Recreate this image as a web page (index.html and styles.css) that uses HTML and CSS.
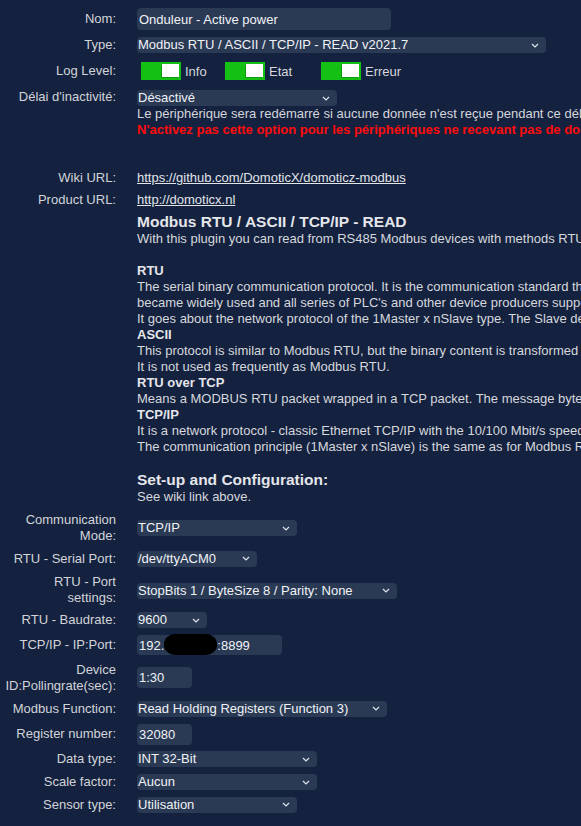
FILE: index.html
```html
<!DOCTYPE html>
<html lang="fr">
<head>
<meta charset="utf-8">
<title>Onduleur - Active power</title>
<link rel="stylesheet" href="styles.css">
</head>
<body>
<div class="page">
  <div class="top">
    <div class="row">
      <span class="lbl">Nom:</span>
      <div class="inp h22 w254">Onduleur - Active power</div>
    </div>
    <div class="row mt7">
      <span class="lbl">Type:</span>
      <div class="sel w409"><span>Modbus RTU / ASCII / TCP/IP - READ v2021.7</span><svg class="chev" width="8" height="5" viewBox="0 0 8 5"><path d="M1 1l3 3 3-3" fill="none" stroke="#dfe3ea" stroke-width="1.2"/></svg></div>
    </div>
    <div class="row mt9">
      <span class="lbl">Log Level:</span>
      <div class="opts">
        <div class="opt o84"><span class="toggle"><span class="knob"></span></span><span>Info</span></div>
        <div class="opt o96"><span class="toggle"><span class="knob"></span></span><span>Etat</span></div>
        <div class="opt"><span class="toggle"><span class="knob"></span></span><span>Erreur</span></div>
      </div>
    </div>
    <div class="row start mt9">
      <span class="lbl">Délai d'inactivité:</span>
      <div class="field">
        <div class="sel w200 mt1"><span>Désactivé</span><svg class="chev" width="8" height="5" viewBox="0 0 8 5"><path d="M1 1l3 3 3-3" fill="none" stroke="#dfe3ea" stroke-width="1.2"/></svg></div>
        <div class="note">Le périphérique sera redémarré si aucune donnée n'est reçue pendant ce délai.</div>
        <div class="warn">N'activez pas cette option pour les périphériques ne recevant pas de données régulièrement !</div>
      </div>
    </div>
  </div>

  <div class="links">
    <div class="row line22">
      <span class="lbl">Wiki URL:</span>
      <a class="link" href="#">https://github.com/DomoticX/domoticz-modbus</a>
    </div>
    <div class="row line22">
      <span class="lbl">Product URL:</span>
      <a class="link" href="#">http://domoticx.nl</a>
    </div>
  </div>

  <div class="row start">
    <span></span>
    <div class="desc">
      <h3 class="h">Modbus RTU / ASCII / TCP/IP - READ</h3>
      <div class="l">With this plugin you can read from RS485 Modbus devices with methods RTU, ASCII or TCP/IP.</div>
      <div class="l">&nbsp;</div>
      <div class="l b">RTU</div>
      <div class="l">The serial binary communication protocol. It is the communication standard that was introduced by Modicon, which</div>
      <div class="l">became widely used and all series of PLC's and other device producers support it.</div>
      <div class="l">It goes about the network protocol of the 1Master x nSlave type. The Slave devices only answer to the Master.</div>
      <div class="l b">ASCII</div>
      <div class="l">This protocol is similar to Modbus RTU, but the binary content is transformed to ASCII characters.</div>
      <div class="l">It is not used as frequently as Modbus RTU.</div>
      <div class="l b">RTU over TCP</div>
      <div class="l">Means a MODBUS RTU packet wrapped in a TCP packet. The message bytes are sent over a TCP connection.</div>
      <div class="l b">TCP/IP</div>
      <div class="l">It is a network protocol - classic Ethernet TCP/IP with the 10/100 Mbit/s speed.</div>
      <div class="l">The communication principle (1Master x nSlave) is the same as for Modbus RTU.</div>
      <div class="l">&nbsp;</div>
      <h3 class="h">Set-up and Configuration:</h3>
      <div class="l">See wiki link above.</div>
    </div>
  </div>

  <div class="form">
    <div class="row">
      <span class="lbl">Communication<br>Mode:</span>
      <div class="sel w160"><span>TCP/IP</span><svg class="chev" width="8" height="5" viewBox="0 0 8 5"><path d="M1 1l3 3 3-3" fill="none" stroke="#dfe3ea" stroke-width="1.2"/></svg></div>
    </div>
    <div class="row">
      <span class="lbl">RTU - Serial Port:</span>
      <div class="sel w120"><span>/dev/ttyACM0</span><svg class="chev" width="8" height="5" viewBox="0 0 8 5"><path d="M1 1l3 3 3-3" fill="none" stroke="#dfe3ea" stroke-width="1.2"/></svg></div>
    </div>
    <div class="row">
      <span class="lbl">RTU - Port<br>settings:</span>
      <div class="sel w260 dn1"><span>StopBits 1 / ByteSize 8 / Parity: None</span><svg class="chev" width="8" height="5" viewBox="0 0 8 5"><path d="M1 1l3 3 3-3" fill="none" stroke="#dfe3ea" stroke-width="1.2"/></svg></div>
    </div>
    <div class="row">
      <span class="lbl">RTU - Baudrate:</span>
      <div class="sel w70"><span>9600</span><svg class="chev" width="8" height="5" viewBox="0 0 8 5"><path d="M1 1l3 3 3-3" fill="none" stroke="#dfe3ea" stroke-width="1.2"/></svg></div>
    </div>
    <div class="row">
      <span class="lbl">TCP/IP - IP:Port:</span>
      <div class="inp h20 w145">192.<span class="blot"></span>:8899</div>
    </div>
    <div class="row">
      <span class="lbl">Device<br>ID:Pollingrate(sec):</span>
      <div class="inp h21 w55">1:30</div>
    </div>
    <div class="row">
      <span class="lbl">Modbus Function:</span>
      <div class="sel w250"><span>Read Holding Registers (Function 3)</span><svg class="chev" width="8" height="5" viewBox="0 0 8 5"><path d="M1 1l3 3 3-3" fill="none" stroke="#dfe3ea" stroke-width="1.2"/></svg></div>
    </div>
    <div class="row">
      <span class="lbl">Register number:</span>
      <div class="inp h21 w55">32080</div>
    </div>
    <div class="row">
      <span class="lbl">Data type:</span>
      <div class="sel w180"><span>INT 32-Bit</span><svg class="chev" width="8" height="5" viewBox="0 0 8 5"><path d="M1 1l3 3 3-3" fill="none" stroke="#dfe3ea" stroke-width="1.2"/></svg></div>
    </div>
    <div class="row">
      <span class="lbl">Scale factor:</span>
      <div class="sel w180"><span>Aucun</span><svg class="chev" width="8" height="5" viewBox="0 0 8 5"><path d="M1 1l3 3 3-3" fill="none" stroke="#dfe3ea" stroke-width="1.2"/></svg></div>
    </div>
    <div class="row">
      <span class="lbl">Sensor type:</span>
      <div class="sel w160"><span>Utilisation</span><svg class="chev" width="8" height="5" viewBox="0 0 8 5"><path d="M1 1l3 3 3-3" fill="none" stroke="#dfe3ea" stroke-width="1.2"/></svg></div>
    </div>
  </div>
</div>
</body>
</html>
```
FILE: styles.css
```css
html, body {
  margin: 0;
  padding: 0;
  background: #142240;
  overflow: hidden;
}
body {
  font-family: "Liberation Sans", Arial, sans-serif;
  font-size: 13px;
  color: #d4d6da;
}
.page {
  width: 1100px;
  padding-top: 8px;
}
.row {
  display: grid;
  grid-template-columns: 116px 1fr;
  column-gap: 21px;
  align-items: center;
}
.row.start { align-items: start; }
.lbl {
  text-align: right;
  line-height: 16px;
  color: #d2d4d8;
}
.mt7 { margin-top: 7px; }
.mt9 { margin-top: 9px; }
.mt1 { margin-top: 1px; }
.dn1 { margin-top: 2px; }

.top { display: flex; flex-direction: column; }

.inp, .sel {
  background: #2a3a55;
  border-radius: 4px;
  color: #f0f2f5;
  box-sizing: border-box;
  white-space: nowrap;
}
.inp {
  display: flex;
  align-items: center;
  padding-left: 2px;
}
.sel {
  height: 16px;
  line-height: 16px;
  display: flex;
  align-items: center;
  justify-content: space-between;
  padding: 0 7px 0 1px;
}
.chev { flex: none; }
.h22 { height: 22px; }
.h21 { height: 21px; }
.h20 { height: 20px; }
.w55 { width: 55px; }
.w70 { width: 70px; }
.w120 { width: 120px; }
.w145 { width: 145px; }
.w160 { width: 160px; }
.w180 { width: 180px; }
.w200 { width: 200px; }
.w250 { width: 250px; }
.w254 { width: 254px; }
.w260 { width: 260px; }
.w409 { width: 409px; }

.blot {
  display: inline-block;
  width: 53px;
  height: 21px;
  margin: -1px 0 0 0;
  background: #000;
  border-radius: 11px / 10px;
}

.opts { display: flex; align-items: center; height: 18px; padding-left: 4px; }
.opt { display: flex; align-items: center; gap: 4px; color: #d6d8dc; }
.o84 { width: 84px; }
.o96 { width: 96px; }
.toggle {
  width: 40px;
  height: 18px;
  background: #14c014;
  display: flex;
  justify-content: flex-end;
  align-items: flex-start;
  padding: 2px 2px 0 0;
  box-sizing: border-box;
}
.knob {
  width: 17px;
  height: 13px;
  background: #ffffff;
  box-shadow: -1px 1px 0 #0d9a0d;
}

.field { display: flex; flex-direction: column; }
.note {
  line-height: 16px;
  white-space: nowrap;
  color: #d4d6da;
}
.warn {
  line-height: 16px;
  white-space: nowrap;
  color: #ff0c0c;
  font-weight: bold;
}

.links { margin-top: 29px; }
.line22 { line-height: 22px; }
.line22 .lbl { line-height: 22px; }
.link {
  color: #e2e4e8;
  text-decoration: underline;
  white-space: nowrap;
}

.desc { padding-top: 2px; }
.h {
  margin: 0;
  font-size: 15.5px;
  line-height: 18px;
  font-weight: bold;
  color: #e4e6ea;
  white-space: nowrap;
}
.l {
  line-height: 16px;
  white-space: nowrap;
  color: #d6d8dc;
}
.l.b { font-weight: bold; color: #e4e6ea; }

.form {
  margin-top: 7px;
  display: flex;
  flex-direction: column;
  gap: 6.8px;
}
```
